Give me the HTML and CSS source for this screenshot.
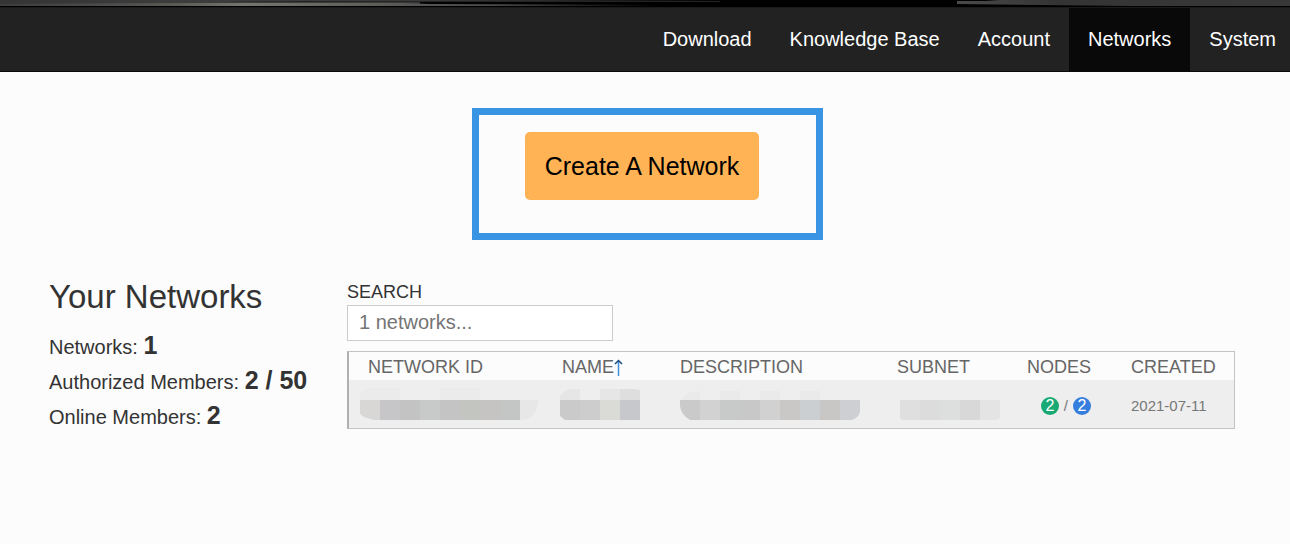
FILE: index.html
```html
<!DOCTYPE html>
<html lang="en">
<head>
<meta charset="utf-8">
<title>Networks</title>
<link rel="stylesheet" href="styles.css">
</head>
<body>
<header class="site-header">
  <svg class="banner" viewBox="0 0 1290 7" preserveAspectRatio="none" aria-hidden="true">
    <defs>
      <linearGradient id="base" gradientUnits="userSpaceOnUse" x1="0" x2="900" y1="0" y2="0"><stop offset="0" stop-color="#343434"/><stop offset=".2" stop-color="#3c3c3c"/><stop offset=".45" stop-color="#3a3a3a"/><stop offset=".6" stop-color="#2c2c2c"/><stop offset=".8" stop-color="#000"/></linearGradient>
      <linearGradient id="shine" gradientUnits="userSpaceOnUse" x1="0" x2="660" y1="0" y2="0"><stop offset="0" stop-color="#3c3c3c"/><stop offset=".25" stop-color="#555753"/><stop offset=".37" stop-color="#737570"/><stop offset=".55" stop-color="#5e605c"/><stop offset=".75" stop-color="#464846"/><stop offset="1" stop-color="#000"/></linearGradient>
      <linearGradient id="right" gradientUnits="userSpaceOnUse" x1="957" x2="1290" y1="0" y2="0"><stop offset="0" stop-color="#4a4a4a"/><stop offset=".3" stop-color="#343434"/><stop offset="1" stop-color="#383838"/></linearGradient>
    </defs>
    <rect width="1290" height="7" fill="#000"/>
    <rect width="900" height="2" fill="url(#base)"/>
    <rect y="2" width="420" height="4" fill="url(#base)"/>
    <path d="M0 4L160 3H400L430 4L660 5V6H0Z" fill="url(#shine)"/>
    <path d="M220 1H720V2H300Z" fill="#242424"/>
    <path d="M957 1H985L1000 0H1290V6H1130L957 4Z" fill="url(#right)"/>
  </svg>
  <nav class="nav">
    <a href="#">Download</a>
    <a href="#">Knowledge Base</a>
    <a href="#">Account</a>
    <a href="#" class="active" aria-current="page">Networks</a>
    <a href="#">System</a>
  </nav>
</header>
<main class="page">
  <div class="create">
    <div class="create-box">
      <button type="button" class="create-button">Create A Network</button>
      <span class="highlight"></span>
    </div>
  </div>
  <div class="content">
    <section class="summary">
      <h1>Your Networks</h1>
      <p>Networks: <strong>1</strong></p>
      <p>Authorized Members: <strong>2 / 50</strong></p>
      <p>Online Members: <strong>2</strong></p>
    </section>
    <section>
      <label class="search-label" for="search">SEARCH</label>
      <input class="search" id="search" type="text" placeholder="1 networks...">
      <table class="networks">
        <colgroup><col class="c-id"><col class="c-name"><col class="c-desc"><col class="c-subnet"><col class="c-nodes"><col></colgroup>
        <thead>
          <tr><th class="id">NETWORK ID</th><th class="name">NAME<span class="sort"><svg width="9" height="18" viewBox="0 0 9 18" aria-hidden="true"><path d="M4.5 2V17" stroke="#3f8fdc" stroke-width="1.5"/><path d="M1 5L4.5 1.5L8 5" fill="none" stroke="#174a80" stroke-width="1.5"/></svg></span></th><th>DESCRIPTION</th><th>SUBNET</th><th class="nodes">NODES</th><th>CREATED</th></tr>
        </thead>
        <tbody>
          <tr>
            <td><svg class="mask" width="178" height="32" viewBox="0 0 178 32" aria-hidden="true">
              <path d="M0 12V4L8 0H40V12ZM80 0H120V12H80Z" fill="#ebebeb"/>
              <path d="M0 12H20V32H14L4 29L0 26Z" fill="#d8d7d5"/>
              <path d="M20 12H40V32H20Z" fill="#c6c6c9"/><path d="M40 12H60V32H40Z" fill="#c3c3c3"/>
              <path d="M60 12H80V32H60Z" fill="#c8caca"/><path d="M80 12H102V32H80Z" fill="#c3c4c3"/>
              <path d="M102 12H120V32H102Z" fill="#c3c5c1"/><path d="M120 12H140V32H120Z" fill="#c6c4c2"/>
              <path d="M140 12H160V32H140Z" fill="#c4c6c5"/><path d="M160 12H178Q177 31 162 32H160Z" fill="#e7e7e7"/>
            </svg></td>
            <td><svg class="mask" width="80" height="32" viewBox="0 0 80 32" aria-hidden="true">
              <path d="M0 12V8Q5 1 12 1H20V12ZM40 1H60V12H40Z" fill="#e6e6e6"/><path d="M60 1H75L80 2V12H60Z" fill="#dedede"/>
              <path d="M0 12H20V32H5L0 28Z" fill="#cacaca"/><path d="M20 12H40V32H20Z" fill="#cdcdcd"/>
              <path d="M40 12H60V32H40Z" fill="#dadad7"/><path d="M60 12H80V32H60Z" fill="#c7c8cb"/>
            </svg></td>
            <td><svg class="mask" width="180" height="32" viewBox="0 0 180 32" aria-hidden="true">
              <path d="M1 12Q5 3 20 3V12ZM40 3H60V12H40ZM80 3H100V12H80ZM120 3H140V12H120Z" fill="#eaeaea"/>
              <path d="M0 12H20V32H10Q1 27 0 18Z" fill="#cacaca"/><path d="M20 12H40V32H20Z" fill="#d2d2d2"/>
              <path d="M40 12H60V32H40Z" fill="#c7cac8"/><path d="M60 12H80V32H60Z" fill="#c8c8c8"/>
              <path d="M80 12H100V32H80Z" fill="#d1d1d2"/><path d="M100 12H120V32H100Z" fill="#c9c8c7"/>
              <path d="M120 12H140V32H120Z" fill="#cbcfd1"/><path d="M140 12H160V32H140Z" fill="#c9c7c6"/>
              <path d="M160 12H180V24Q178 30 172 32H160Z" fill="#cecfd2"/>
            </svg></td>
            <td><svg class="mask" width="104" height="32" viewBox="0 0 104 32" aria-hidden="true">
              <path d="M3 12H23V32H5L3 30Z" fill="#dfdfdf"/><path d="M23 12H43V32H23Z" fill="#dcdcdd"/>
              <path d="M43 12H63V32H43Z" fill="#dddfde"/><path d="M63 12H83V32H63Z" fill="#d8d8d8"/>
              <path d="M83 12H103V30L100 32H83Z" fill="#e4e4e4"/>
            </svg></td>
            <td class="nodes"><span class="counts"><span class="badge online">2</span>/<span class="badge total">2</span></span></td>
            <td>2021-07-11</td>
          </tr>
        </tbody>
      </table>
    </section>
  </div>
</main>
</body>
</html>
```
FILE: styles.css
```css
* {
  box-sizing: border-box;
}

body {
  margin: 0;
  background: #fcfcfc;
  color: #333;
  font-family: "Liberation Sans", Arial, sans-serif;
  font-size: 20px;
}

.site-header {
  background: #222;
  border-bottom: 1px solid #0d0808;
}

.banner {
  display: block;
  width: 100%;
  height: 7px;
}

.nav {
  display: flex;
  justify-content: flex-end;
  border-top: 1px solid #1a1a1a;
}

.nav a {
  padding: 0 19px;
  color: #fff;
  line-height: 63px;
  text-decoration: none;
}

.nav a:last-child {
  padding-right: 14px;
}

.nav .active {
  background: #090909;
}

.page {
  padding: 60px 55px 40px 49px;
}

.create {
  display: flex;
  justify-content: center;
}

.create-box {
  position: relative;
}

.create-button {
  display: block;
  padding: 20px;
  border: 0;
  border-radius: 5px;
  background: #ffb354;
  color: #000;
  font: 25px/28px "Liberation Sans", Arial, sans-serif;
}

.highlight {
  position: absolute;
  inset: -24px -64px -40px -53px;
  border: 7px solid #3994e4;
  pointer-events: none;
}

.content {
  display: grid;
  grid-template-columns: 298px 1fr;
  margin-top: 76px;
}

.summary h1 {
  margin: 0 0 12px;
  font-size: 33px;
  font-weight: 400;
  line-height: 42px;
}

.summary p {
  margin: 0;
  line-height: 35px;
}

.summary strong {
  font-size: 25px;
  line-height: 30px;
}

.search-label {
  display: block;
  padding-top: 4px;
  font-size: 18px;
  line-height: 25px;
}

.search {
  display: block;
  width: 266px;
  height: 36px;
  margin-bottom: 10px;
  padding: 0 11px 2px;
  border: 1px solid #ccc;
  background: #fff;
  font: 20px "Liberation Sans", Arial, sans-serif;
}

.search::placeholder {
  color: #757575;
}

.networks {
  width: 100%;
  table-layout: fixed;
  border-collapse: separate;
  border-spacing: 0;
  border: 1px solid #c3c3c3;
  border-left: 2px solid #b0b0b0;
  color: #666;
}

.c-id {
  width: 199px;
}

.c-name {
  width: 120px;
}

.c-desc {
  width: 217px;
}

.c-subnet {
  width: 124px;
}

.c-nodes {
  width: 110px;
}

.networks th {
  height: 28px;
  padding: 2px 0 0 12px;
  font-size: 18px;
  font-weight: 400;
  line-height: 26px;
  text-align: left;
  white-space: nowrap;
}

.networks .id {
  padding-left: 19px;
}

.networks .name {
  padding-left: 14px;
}

.networks td {
  height: 48px;
  padding: 0 0 0 12px;
  background: #eee;
  color: #777;
  font-size: 15px;
  line-height: 20px;
}

.networks tbody td:nth-last-child(-n+2) {
  padding-top: 3px;
}

.networks td:first-child {
  padding-left: 11px;
}

.networks .nodes {
  padding-right: 28px;
  text-align: right;
}

.sort svg {
  vertical-align: -4px;
}

.mask {
  display: block;
}

.counts {
  display: flex;
  align-items: center;
  justify-content: flex-end;
  gap: 5px;
}

.badge {
  width: 18px;
  height: 18px;
  border-radius: 9px;
  color: #fff;
  font-size: 16px;
  line-height: 18px;
  text-align: center;
}

.online {
  background: #19a974;
}

.total {
  background: #357edd;
}
```
